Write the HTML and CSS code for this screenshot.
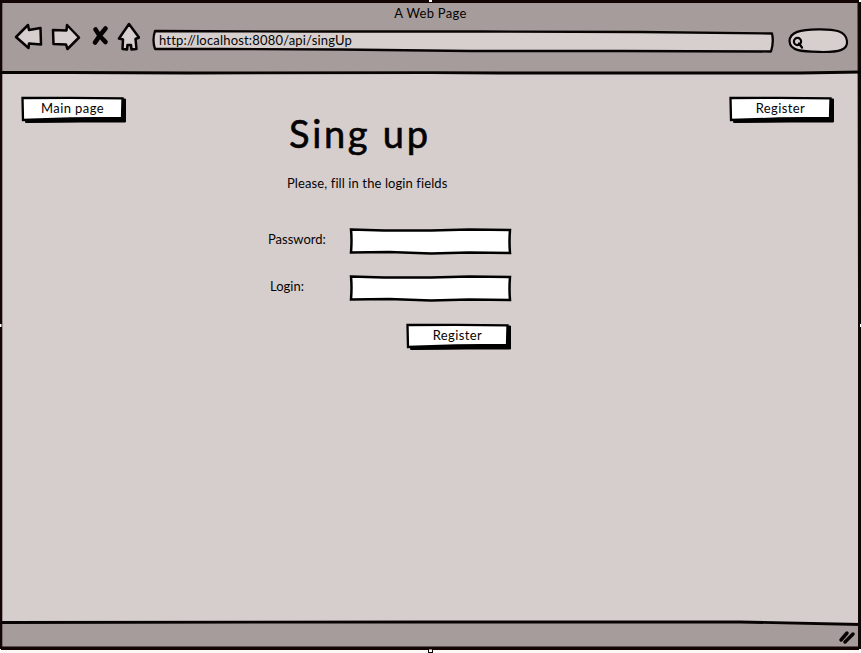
FILE: index.html
```html
<!DOCTYPE html>
<html lang="en">
<head>
<meta charset="utf-8">
<title>A Web Page</title>
<link rel="stylesheet" href="styles.css">
</head>
<body>
<div class="window">
  <header class="chrome">
    <div class="title"><span>A Web Page</span></div>
    <div class="toolbar">
      <svg class="nav" width="126" height="32" viewBox="14 22 126 32">
        <path d="M16 37 L28 25 L29 30 L40.500 28 L41 44.500 L29 43.500 L28.500 48 Z"/>
        <path d="M53 30 L66.500 30.500 L67 25 L79 37.500 L67.500 49 L66 44.500 L53.500 44 Z"/>
        <path class="cross" d="M95.500 29.500 Q99 36 105.500 42 M105.500 28.500 Q99 36 95 42.500"/>
        <path d="M129 24 L139 37.500 L135.500 39 L136.500 49 L131.500 49.500 L131 45 L127.500 45 L127 49.500 L122.500 49 L123 39.500 L119 38.500 Z"/>
      </svg>
      <div class="address">
        <svg class="sketch" width="622" height="24" viewBox="152 29 622 24"><path d="M155 31 L300 31.500 L480 31.500 L640 32 L772 33.500 Q774 42 771 51.500 L620 51 L470 51 L340 49.500 L220 49 L155 49 Q152 40 155 31 Z"/></svg>
        <span>http://localhost:8080/api/singUp</span>
      </div>
      <svg class="search" width="62" height="28" viewBox="788 27 62 28">
        <path d="M789.500 41 C790 32 800 29.500 818 29.300 C835 29 846 31 847 41 C848 50 839 52 823 52 C804 51.500 790 52 789.500 41 Z"/>
        <circle cx="797.500" cy="41.500" r="3.600"/><path d="M799 43.500 L802 47.500"/>
      </svg>
    </div>
  </header>
  <main class="page">
    <nav class="page-nav">
      <button class="btn"><svg class="sketch" width="105" height="27" viewBox="0 0 105 27"><path class="shade" d="M5 4 L104.500 3 L104.500 26 L60 26 L5 26.500 Z"/><path d="M1.500 2 L50 1.800 L101.500 2.300 L101 22 L50 22.500 L2 24 Z"/></svg><span>Main page</span></button>
      <button class="btn"><svg class="sketch" width="105" height="27" viewBox="0 0 105 27"><path class="shade" d="M5 4 L104.500 3 L104.500 26 L60 26 L5 26.500 Z"/><path d="M1.500 2 L50 1.800 L101.500 2.300 L101 22 L50 22.500 L2 24 Z"/></svg><span>Register</span></button>
    </nav>
    <section class="form">
      <h1><span>Sing up</span></h1>
      <p><span>Please, fill in the login fields</span></p>
      <div class="field">
        <label><span class="password">Password:</span></label>
        <svg class="box" width="163" height="27" viewBox="0 0 163 27"><path d="M2 1.500 L35 2.500 L82 2.500 L120 1.500 L161 2 Q160 14 161 25 L120 24.500 L82 25.500 L40 24 L2 24.500 Q3 12 2 1.500 Z"/></svg>
      </div>
      <div class="field">
        <label><span class="login">Login:</span></label>
        <svg class="box" width="163" height="27" viewBox="0 0 163 27"><path d="M2 1.500 L35 2.500 L82 2.500 L120 1.500 L161 2 Q160 14 161 25 L120 24.500 L82 25.500 L40 24 L2 24.500 Q3 12 2 1.500 Z"/></svg>
      </div>
      <button class="btn submit"><svg class="sketch" width="105" height="27" viewBox="0 0 105 27"><path class="shade" d="M5 4 L104.500 3 L104.500 26 L60 26 L5 26.500 Z"/><path d="M1.500 2 L50 1.800 L101.500 2.300 L101 22 L50 22.500 L2 24 Z"/></svg><span>Register</span></button>
    </section>
  </main>
  <footer class="status">
    <svg width="861" height="34" viewBox="0 619 861 34">
      <path class="fill" d="M0 622 L430 622 L740 622 L861 625 V650 H0 Z"/>
      <path class="line" d="M0 622.500 L430 622 L740 622 L861 624.500"/>
      <path class="grip" d="M841 640 L847 633 M845 642 L853 634"/>
    </svg>
  </footer>
  <svg class="frame" width="861" height="653" viewBox="0 0 861 653">
    <path d="M0 0 H861 V650 H0 Z M2.300 3 V646.500 H200 L430 646.500 H858 V300 L857.500 3 Z" fill-rule="evenodd"/>
    <path class="line" d="M0 72.500 H70 L190 73 L430 72.600 L500 73 H800 L861 72"/>
    <path class="handle" d="M429 0 H432 V2 H429 Z M0 324 H1.500 V327 H0 Z M860 324 H861 V327 H860 Z M0 649 H1 V652 H0 Z M859 649 H861 V652 H859 Z M859 0 H861 V2 H859 Z"/>
    <path d="M428 648 H433 V653 H428 Z"/><path class="handle" d="M429 649.500 H432 V652 H429 Z"/>
  </svg>
</div>
</body>
</html>
```
FILE: styles.css
```css
* { box-sizing: border-box; }
body { margin: 0; background: #fdf8f5; overflow: hidden; font: 13px/18px Lato, "Open Sans", sans-serif; color: #050303; }
svg { display: block; }
path, circle { stroke-linecap: round; stroke-linejoin: round; }
.window { position: relative; width: 861px; height: 653px; display: flex; flex-direction: column; }
.chrome { height: 73px; background: #a59c9b; padding-top: 4px; }
.title { text-align: center; height: 18px; letter-spacing: 0.3px; }
.toolbar { display: flex; padding: 0 11px 0 14px; }
.nav { fill: #d7cfce; stroke: #080303; stroke-width: 2.5; margin-right: 12px; }
.nav .cross { stroke-width: 4.6; }
.address { position: relative; width: 622px; height: 24px; margin: 7px 14px 0 0; padding: 2px 0 0 7px; letter-spacing: 0.18px; }
.sketch { position: absolute; left: 0; top: 0; fill: #d7cfce; stroke: #080303; stroke-width: 2.3; }
.address span, .btn span { position: relative; }
.search { margin-top: 5px; fill: #d7cfce; stroke: #080303; stroke-width: 2.2; }
.page { flex: 1; background: #d6cecd; padding: 22px 27px 0 21px; }
.page-nav { display: flex; justify-content: space-between; height: 27px; margin-top: 1px; }
.btn { position: relative; width: 105px; height: 27px; border: 0; padding: 0 2px 4px 0; background: none; font: inherit; color: inherit; letter-spacing: 0.4px; display: flex; align-items: center; justify-content: center; }
.btn .sketch { fill: #fff; stroke: #000; stroke-width: 2.3; }
.btn .sketch path { stroke-linejoin: miter; }
.btn .shade { fill: #000; stroke-width: 1; }
.form { width: 246px; margin-left: 244px; display: flex; flex-direction: column; }
h1 { margin: -14px 0 0 24px; font-size: 38px; line-height: 48px; font-weight: 400; letter-spacing: 2.7px; white-space: nowrap; -webkit-text-stroke: 0.6px #000; }
p { margin: 17px 0 0 22px; letter-spacing: 0.1px; white-space: nowrap; }
.field { display: flex; justify-content: space-between; height: 27px; margin-bottom: 20px; }
p + .field { margin-top: 36px; }
.field label { padding: 2px 0 0 3px; }
.field .login { padding-left: 2px; }
.box { fill: #fff; stroke: #000; stroke-width: 2.5; margin-right: -1px; }
.box path { stroke-linejoin: miter; }
.submit { align-self: flex-end; margin: 1px 0 0; }
.status { height: 34px; background: #fdf8f5; }
.status svg { background: linear-gradient(#d6cecd 5px, transparent 5px); }
.fill { fill: #a59c9b; }
.line { fill: none; stroke: #080303; stroke-width: 2.8; }
.grip { fill: none; stroke: #080303; stroke-width: 3.5; }
.frame { position: absolute; inset: 0; pointer-events: none; fill: #120504; }
.frame .line { fill: none; }
.handle { fill: #fff; }
```
